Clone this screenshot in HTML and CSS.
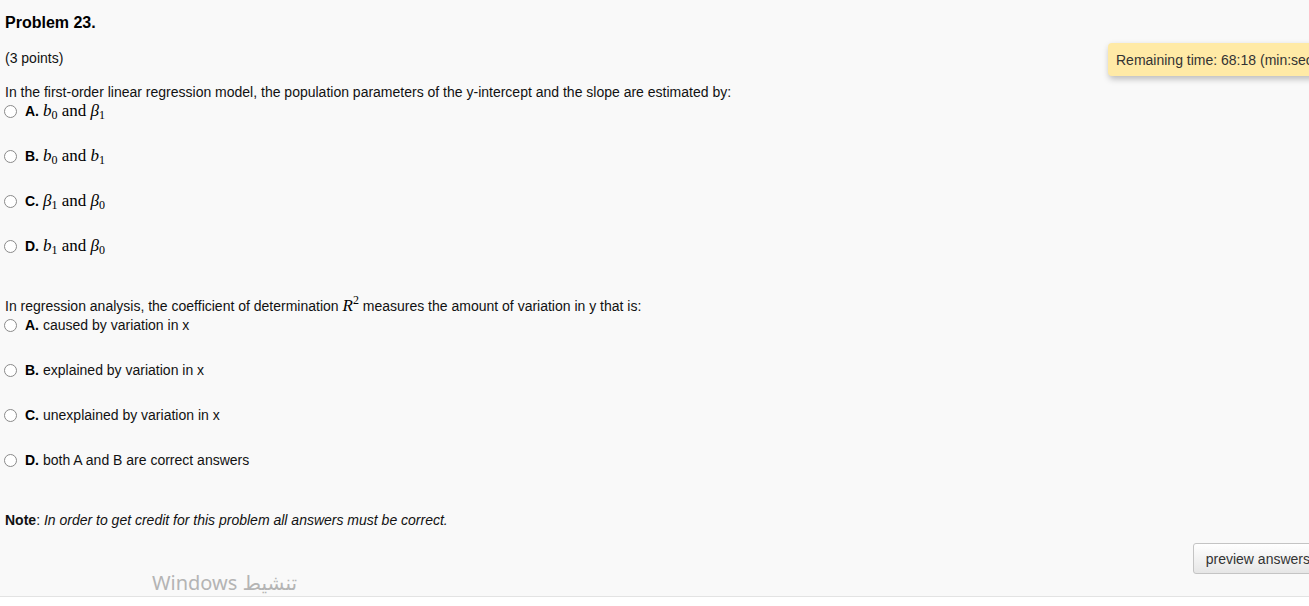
FILE: index.html
```html
<!DOCTYPE html>
<html lang="en">
<head>
  <meta charset="UTF-8">
  <title>Problem 23</title>
  <link rel="stylesheet" href="styles.css">
</head>
<body>
  <div class="pagina">
    <div class="contenido">
      <h3 class="titulo">Problem 23.</h3>
      <p class="puntos">(3 points)</p>
      <div class="tiempo">Remaining time: 68:18 (min:sec)</div>

      <div class="pregunta">
        <p class="enunciado">In the first-order linear regression model, the population parameters of the y-intercept and the slope are estimated by:</p>
        <label class="opcion"><span class="radio"></span><b>A.</b> <span class="mate"><i>b</i><sub>0</sub> and <i>β</i><sub>1</sub></span></label>
        <label class="opcion"><span class="radio"></span><b>B.</b> <span class="mate"><i>b</i><sub>0</sub> and <i>b</i><sub>1</sub></span></label>
        <label class="opcion"><span class="radio"></span><b>C.</b> <span class="mate"><i>β</i><sub>1</sub> and <i>β</i><sub>0</sub></span></label>
        <label class="opcion"><span class="radio"></span><b>D.</b> <span class="mate"><i>b</i><sub>1</sub> and <i>β</i><sub>0</sub></span></label>
      </div>

      <div class="pregunta segunda">
        <p class="enunciado">In regression analysis, the coefficient of determination <span class="mate"><i>R</i><sup>2</sup></span> measures the amount of variation in y that is:</p>
        <label class="opcion"><span class="radio"></span><b>A.</b> caused by variation in x</label>
        <label class="opcion"><span class="radio"></span><b>B.</b> explained by variation in x</label>
        <label class="opcion"><span class="radio"></span><b>C.</b> unexplained by variation in x</label>
        <label class="opcion"><span class="radio"></span><b>D.</b> both A and B are correct answers</label>
      </div>

      <p class="nota"><b>Note</b>: <i>In order to get credit for this problem all answers must be correct.</i></p>

      <div class="acciones">
        <button class="boton">preview answers</button>
      </div>
    </div>
    <div class="marca">
      <span class="marca-titulo">Windows تنشيط</span>
      <span class="marca-sub">انتقل إلى الإعدادات لتنشيط Windows</span>
    </div>
  </div>
</body>
</html>
```

FILE: styles.css
```css
body {
  margin: 0;
  padding: 0;
  background: #ffffff;
  font-family: Arial, "Liberation Sans", sans-serif;
  font-size: 14px;
  color: #111;
  overflow: hidden;
}

.pagina {
  height: 596px;
  background: #f9f9f9;
  border-bottom: 1px solid #e3e3e3;
  position: relative;
  overflow: hidden;
}

.contenido {
  padding: 0 0 0 5px;
}

.titulo {
  margin: 0;
  padding-top: 13px;
  font-size: 16px;
  font-weight: bold;
  line-height: 19px;
  color: #000;
}

.puntos {
  margin: 18px 0 0;
  line-height: 16px;
}

/* aviso flotante del tiempo restante */
.tiempo {
  position: absolute;
  top: 43px;
  left: 1108px;
  background: #ffeaa6;
  border-radius: 4px;
  box-shadow: 1px 3px 6px rgba(0, 0, 0, 0.25);
  padding: 9px 16px 8px 8px;
  white-space: nowrap;
  line-height: 16px;
  color: #333;
}

.pregunta {
  margin-top: 18px;
}

.enunciado {
  margin: 0;
  line-height: 16px;
}

.opcion {
  display: flex;
  align-items: center;
  height: 22px;
  margin-bottom: 23px;
  line-height: 22px;
}

.opcion b {
  margin-right: 4px;
  color: #000;
}

.radio {
  width: 11px;
  height: 11px;
  border: 1px solid #8a8a8a;
  border-radius: 50%;
  background: #fff;
  margin: 0 8px 0 -1px;
  flex-shrink: 0;
}

.mate {
  font-family: "Liberation Serif", "DejaVu Serif", serif;
  font-size: 17px;
  color: #000;
}

.mate sub {
  font-size: 12px;
  font-style: normal;
  vertical-align: -3px;
  line-height: 0;
}

.mate sup {
  font-size: 12px;
  vertical-align: 7px;
  line-height: 0;
}

.segunda {
  margin-top: 41px;
}

.segunda .enunciado {
  margin-bottom: 2px;
}

.segunda .opcion {
  height: 18px;
  line-height: 18px;
  margin-bottom: 27px;
}

.nota {
  margin: 43px 0 0;
  line-height: 16px;
}

.acciones {
  display: flex;
  justify-content: flex-end;
  margin-top: 15px;
  margin-right: -14px;
}

.boton {
  font-family: Arial, "Liberation Sans", sans-serif;
  font-size: 14px;
  color: #333;
  background: linear-gradient(#ffffff, #e6e6e6);
  border: 1px solid #c4c4c4;
  border-radius: 3px;
  padding: 6px 12px;
  height: 31px;
  cursor: pointer;
}

.marca {
  position: absolute;
  left: 55px;
  top: 569px;
  display: flex;
  flex-direction: column;
  align-items: flex-end;
  font-family: "Noto Sans", "DejaVu Sans", sans-serif;
  color: #b4b4b4;
  width: 242px;
}

.marca-titulo {
  font-size: 20px;
  line-height: 28px;
}

.marca-sub {
  font-size: 12px;
  line-height: 16px;
  white-space: nowrap;
}
```
